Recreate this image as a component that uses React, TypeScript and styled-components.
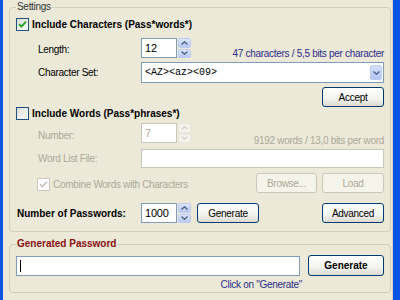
import styled, { createGlobalStyle } from 'styled-components';

const Global = createGlobalStyle`
  html, body { margin: 0; padding: 0; }
  body { background: #ece9d8; }
  * { box-sizing: border-box; }
`;

const Window = styled.div`
  width: 400px;
  height: 300px;
  overflow: hidden;
  background: #ece9d8;
  border-left: 3px solid #0a55e3;
  border-right: 7px solid #0a55e3;
  box-shadow: inset -1px 0 0 #d8d4c4;
  font-family: "Liberation Sans", Arial, sans-serif;
  font-size: 10px;
  letter-spacing: -0.3px;
  color: #000;
`;

const Group = styled.fieldset<{ $mt?: number; $pb?: number }>`
  margin: ${p => p.$mt ?? 0}px 2px 0 6px;
  padding: 0 6px ${p => p.$pb ?? 0}px 0;
  border: 1px solid #d0d0bf;
  border-radius: 4px;
  min-width: 0;
  display: flex;
  flex-direction: column;
`;

const Legend = styled.legend<{ $strong?: boolean }>`
  margin-left: 6px;
  padding: 0 1px;
  line-height: 14px;
  font-weight: ${p => (p.$strong ? 'bold' : 'normal')};
  letter-spacing: ${p => (p.$strong ? '0' : '-0.3px')};
  color: ${p => (p.$strong ? '#8b1010' : '#333')};
`;

const Row = styled.div<{ $h?: number; $mt?: number; $pl?: number; $align?: string }>`
  display: flex;
  align-items: ${p => p.$align ?? 'center'};
  height: ${p => (p.$h ? `${p.$h}px` : 'auto')};
  margin-top: ${p => p.$mt ?? 0}px;
  padding-left: ${p => p.$pl ?? 0}px;
`;

const Label = styled.div<{ $w: number; $disabled?: boolean; $bold?: boolean }>`
  width: ${p => p.$w}px;
  flex: none;
  align-self: center;
  white-space: nowrap;
  color: ${p => (p.$disabled ? '#aca899' : '#000')};
  font-weight: ${p => (p.$bold ? 'bold' : 'normal')};
  letter-spacing: ${p => (p.$bold ? '0' : '-0.3px')};
`;

const Spacer = styled.div`
  flex: 1;
`;

const Info = styled.div<{ $disabled?: boolean }>`
  align-self: flex-end;
  line-height: 12px;
  white-space: nowrap;
  color: ${p => (p.$disabled ? '#aca899' : '#2b2b8c')};
`;

const CheckWrap = styled.label<{ $disabled?: boolean; $bold?: boolean }>`
  display: flex;
  align-items: center;
  gap: 3px;
  height: 13px;
  white-space: nowrap;
  font-weight: ${p => (p.$bold ? 'bold' : 'normal')};
  letter-spacing: ${p => (p.$bold ? '0' : '-0.3px')};
  color: ${p => (p.$disabled ? '#aca899' : '#000')};
`;

const Box = styled.span<{ $disabled?: boolean }>`
  width: 13px;
  height: 13px;
  flex: none;
  display: flex;
  align-items: center;
  justify-content: center;
  border: 1px solid ${p => (p.$disabled ? '#cac8bb' : '#1c5180')};
  background: ${p =>
    p.$disabled ? '#fff' : 'linear-gradient(135deg, #dcdcd7 0%, #fbfbf9 100%)'};
`;

const Field = styled.div<{ $w?: number; $h?: number; $disabled?: boolean; $mono?: boolean }>`
  width: ${p => (p.$w ? `${p.$w}px` : 'auto')};
  flex: ${p => (p.$w ? 'none' : '1')};
  height: ${p => p.$h ?? 20}px;
  display: flex;
  align-items: center;
  padding-left: 3px;
  background: #fff;
  border: 1px solid ${p => (p.$disabled ? '#c9c7ba' : '#7f9db9')};
  color: ${p => (p.$disabled ? '#aca899' : '#000')};
  font-family: ${p => (p.$mono ? '"Liberation Mono", "Courier New", monospace' : 'inherit')};
  font-size: ${p => (p.$mono ? '10px' : '11px')};
  letter-spacing: ${p => (p.$mono ? '0' : '-0.2px')};
  white-space: nowrap;
`;

const Spin = styled.div`
  display: flex;
  align-items: center;
  gap: 1px;
`;

const SpinButtons = styled.div`
  display: flex;
  flex-direction: column;
  gap: 1px;
  height: 20px;
  width: 13px;
`;

const SpinButton = styled.div<{ $disabled?: boolean }>`
  flex: 1;
  display: flex;
  align-items: center;
  justify-content: center;
  border-radius: 2px;
  background: ${p =>
    p.$disabled ? '#f4f3ee' : 'linear-gradient(180deg, #dde6fb 0%, #b7c9f3 100%)'};
  border: 1px solid ${p => (p.$disabled ? '#e8e6dc' : '#bccbef')};
`;

const DropButton = styled.div`
  width: 12px;
  height: 15px;
  margin-right: 1px;
  margin-left: auto;
  display: flex;
  align-items: center;
  justify-content: center;
  border-radius: 2px;
  background: linear-gradient(180deg, #d5e0fb 0%, #b2c6f5 100%);
  border: 1px solid #bccbef;
`;

const Button = styled.button<{ $w: number; $h?: number; $bold?: boolean; $disabled?: boolean }>`
  width: ${p => p.$w}px;
  height: ${p => p.$h ?? 20}px;
  flex: none;
  padding: 0;
  border-radius: 3px;
  border: 1px solid ${p => (p.$disabled ? '#c9c7ba' : '#003c74')};
  background: ${p =>
    p.$disabled ? '#f5f4ea' : 'linear-gradient(180deg, #ffffff 0%, #f3f3ef 60%, #dcdad0 100%)'};
  color: ${p => (p.$disabled ? '#aca899' : '#000')};
  font-family: inherit;
  font-size: 10px;
  font-weight: ${p => (p.$bold ? 'bold' : 'normal')};
  letter-spacing: ${p => (p.$bold ? '0' : '-0.3px')};
`;

const Column = styled.div`
  display: flex;
  flex-direction: column;
  width: 284px;
`;

const Hint = styled.div`
  margin-top: 3px;
  margin-right: -2px;
  line-height: 12px;
  text-align: right;
  color: #2b2b8c;
`;

const Caret = styled.span`
  width: 1px;
  height: 12px;
  background: #000;
`;

const Check = ({ color }: { color: string }) => (
  <svg width="9" height="9" viewBox="0 0 9 9">
    <path d="M1 4.2 L3.4 6.6 L8 1.6" fill="none" stroke={color} strokeWidth="1.8" />
  </svg>
);

const Chevron = ({ up, color }: { up?: boolean; color: string }) => (
  <svg width="7" height="4" viewBox="0 0 7 4">
    <path d={up ? 'M0.5 3.5 L3.5 0.8 L6.5 3.5' : 'M0.5 0.5 L3.5 3.2 L6.5 0.5'} fill="none" stroke={color} strokeWidth="1.4" />
  </svg>
);

const Spinner = ({ value, disabled }: { value: string; disabled?: boolean }) => {
  const c = disabled ? '#d6d4c8' : '#4d6185';
  return (
    <Spin>
      <Field $w={36} $disabled={disabled}>{value}</Field>
      <SpinButtons>
        <SpinButton $disabled={disabled}><Chevron up color={c} /></SpinButton>
        <SpinButton $disabled={disabled}><Chevron color={c} /></SpinButton>
      </SpinButtons>
    </Spin>
  );
};

export default function App() {
  return (
    <Window>
      <Global />
      <Group $pb={8}>
        <Legend>Settings</Legend>
        <Row $h={14} $mt={3} $pl={6}>
          <CheckWrap $bold>
            <Box><Check color="#21a121" /></Box>
            Include Characters (Pass*words*)
          </CheckWrap>
        </Row>
        <Row $h={22} $mt={7} $pl={28} $align="flex-start">
          <Label $w={103}>Length:</Label>
          <Spinner value="12" />
          <Spacer />
          <Info>47 characters / 5,5 bits per character</Info>
        </Row>
        <Row $h={21} $mt={2} $pl={28}>
          <Label $w={103}>Character Set:</Label>
          <Field $h={21} $mono>
            &lt;AZ&gt;&lt;az&gt;&lt;09&gt;
            <DropButton><Chevron color="#4d6185" /></DropButton>
          </Field>
        </Row>
        <Row $h={20} $mt={4}>
          <Spacer />
          <Button $w={62}>Accept</Button>
        </Row>
        <Row $h={13} $pl={6}>
          <CheckWrap $bold>
            <Box />
            Include Words (Pass*phrases*)
          </CheckWrap>
        </Row>
        <Row $h={24} $mt={3} $pl={28} $align="flex-start">
          <Label $w={103} $disabled>Number:</Label>
          <Spinner value="7" disabled />
          <Spacer />
          <Info $disabled>9192 words / 13,0 bits per word</Info>
        </Row>
        <Row $h={19} $mt={2} $pl={28}>
          <Label $w={103} $disabled>Word List File:</Label>
          <Field $h={19} $disabled />
        </Row>
        <Row $h={20} $mt={5} $pl={27}>
          <CheckWrap $disabled style={{ alignSelf: 'flex-end', marginBottom: 2 }}>
            <Box $disabled><Check color="#cac8bb" /></Box>
            Combine Words with Characters
          </CheckWrap>
          <Spacer />
          <Button $w={61} $disabled>Browse...</Button>
          <Button $w={62} $disabled style={{ marginLeft: 5 }}>Load</Button>
        </Row>
        <Row $h={20} $mt={10} $pl={7}>
          <Label $w={124} $bold>Number of Passwords:</Label>
          <Spinner value="1000" />
          <Button $w={62} style={{ marginLeft: 6 }}>Generate</Button>
          <Spacer />
          <Button $w={62}>Advanced</Button>
        </Row>
      </Group>
      <Group $mt={5} $pb={1}>
        <Legend $strong>Generated Password</Legend>
        <Row $mt={4} $pl={6} $align="flex-start">
          <Column>
            <Field $w={284} style={{ marginTop: 1 }}><Caret /></Field>
            <Hint>Click on "Generate"</Hint>
          </Column>
          <Spacer />
          <Button $w={76} $h={21} $bold>Generate</Button>
        </Row>
      </Group>
    </Window>
  );
}
